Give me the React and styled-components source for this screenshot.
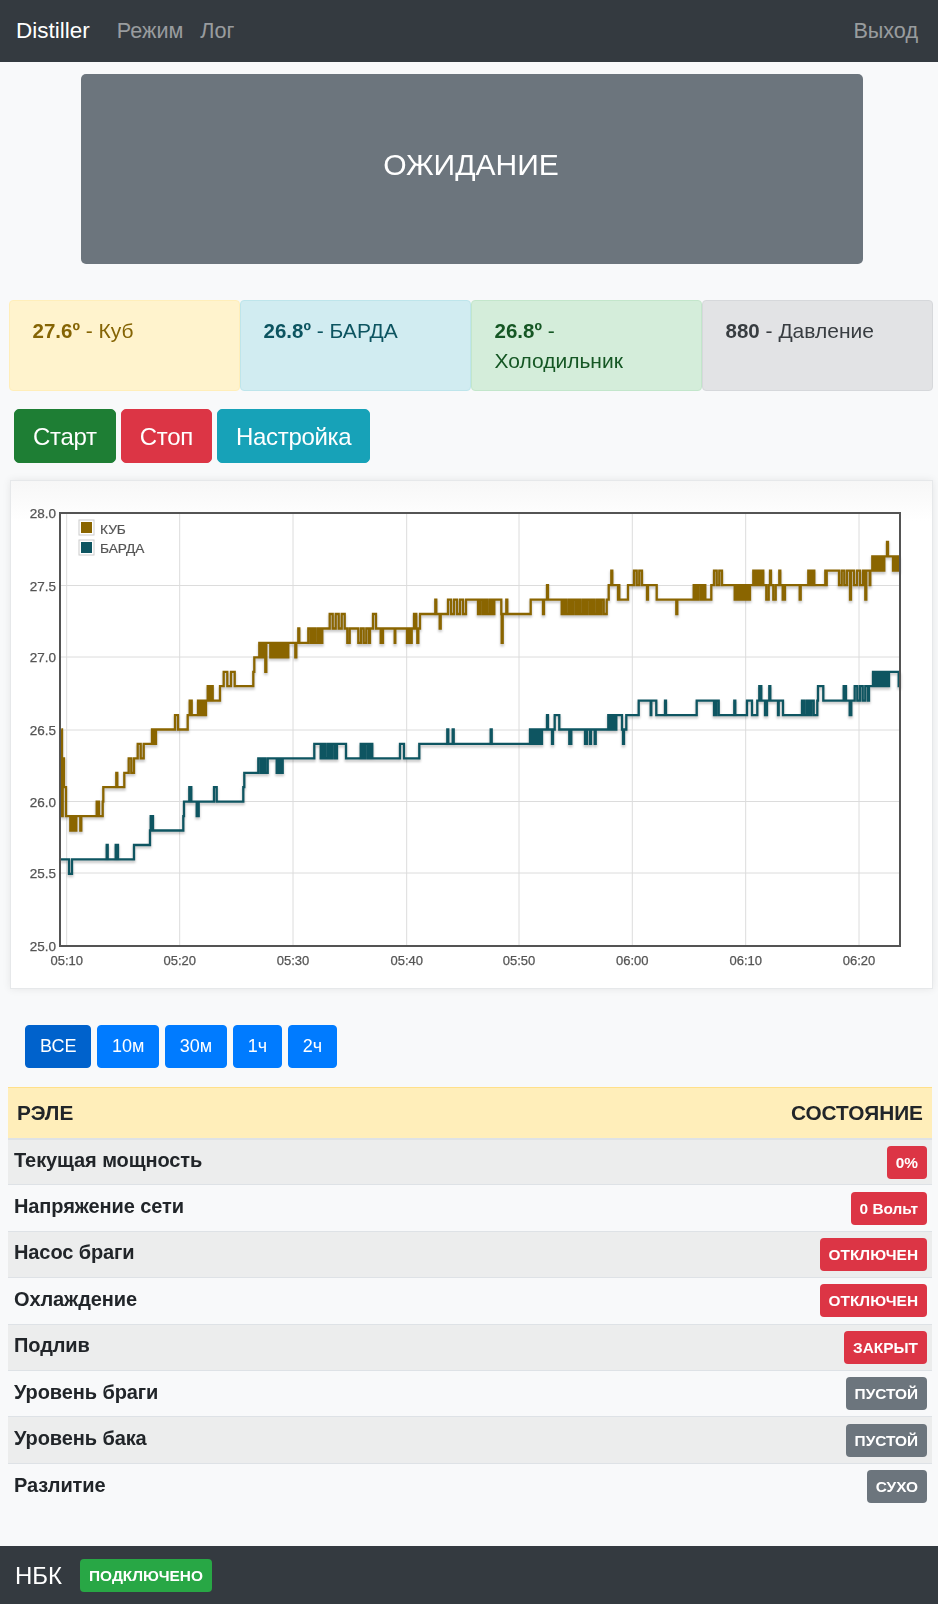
import React from "react";
import styled, { createGlobalStyle } from "styled-components";

const Global = createGlobalStyle`
  html, body { margin: 0; padding: 0; background: #f8f9fa; }
  body { font-family: "Liberation Sans", Arial, sans-serif; font-size: 20px; line-height: 1.5; color: #212529; }
  * { box-sizing: border-box; }
`;

const Page = styled.div`
  width: 938px;
  height: 1604px;
  display: flex;
  flex-direction: column;
  filter: blur(0.35px);
`;

const Navbar = styled.nav`
  height: 62px;
  flex: none;
  background: #343a40;
  display: flex;
  align-items: center;
  padding: 0 20px 0 16px;
`;
const Brand = styled.span`
  color: #fff;
  font-size: 22.5px;
  margin-right: 27px;
`;
const NavLink = styled.span`
  color: rgba(255, 255, 255, 0.5);
  font-size: 21.6px;
  margin-right: 17px;
  &:last-child { margin: 0 0 0 auto; }
`;

const Main = styled.main`
  flex: 1;
  padding: 12px 5px 0 8px;
`;

const Hero = styled.div`
  width: 782px;
  height: 190px;
  margin: 0 0 36px 73px;
  background: #6c757d;
  border-radius: 5px;
  color: #fff;
  font-size: 30px;
  display: flex;
  align-items: center;
  justify-content: center;
  padding: 0 2px 10px 0;
`;

const Alerts = styled.div`
  margin: 0 0 18px 1px;
  width: 924px;
  display: grid;
  grid-template-columns: repeat(4, 1fr);
`;
const Alert = styled.div`
  height: 90.5px;
  padding: 15px 22.5px;
  border: 1px solid ${(p) => p.$border};
  border-radius: 4px;
  background: ${(p) => p.$bg};
  color: ${(p) => p.$fg};
  font-size: 21px;
  line-height: 30px;
`;
const Value = styled.b`
  font-weight: 700;
  font-size: 20.5px;
`;

const Actions = styled.div`
  display: flex;
  gap: 5px;
  margin: 0 0 17px 6px;
`;
const ActionButton = styled.button`
  height: 54.5px;
  padding: 2px 18px 0;
  border: 1px solid ${(p) => p.$bg};
  border-radius: 5px;
  background: ${(p) => p.$bg};
  color: #fff;
  font: 24px "Liberation Sans", Arial, sans-serif;
  letter-spacing: -0.3px;
`;

const ChartCard = styled.section`
  width: 923px;
  height: 509px;
  margin: 0 0 36px 2px;
  background: linear-gradient(#f7f7f7, #fff 40px);
  border: 1px solid #e6e8ea;
  box-shadow: 0 0 8px rgba(0, 0, 0, 0.08);
  & svg { display: block; }
`;

const Ranges = styled.div`
  display: flex;
  gap: 5.5px;
  margin: 0 0 19px 17px;
`;
const RangeButton = styled.button`
  height: 43px;
  padding: 0 14px;
  border: 1px solid ${(p) => (p.$active ? "#0062cc" : "#007bff")};
  border-radius: 4px;
  background: ${(p) => (p.$active ? "#0062cc" : "#007bff")};
  color: #fff;
  font: 18px "Liberation Sans", Arial, sans-serif;
`;

const Table = styled.table`
  width: 924px;
  border-collapse: collapse;
  table-layout: auto;
`;
const HeadRow = styled.tr`
  height: 51px;
  background: #ffeeba;
  border-top: 1px solid #ffe08a;
  border-bottom: 2px solid #dee2e6;
`;
const HeadCell = styled.th`
  padding: 0 9px;
  font-size: 20.8px;
  font-weight: 700;
  text-align: ${(p) => p.$align || "left"};
`;
const Row = styled.tr`
  height: 46.4px;
  background: ${(p) => (p.$odd ? "#eceded" : "transparent")};
  border-bottom: 1px solid #dee2e6;
  &:last-child { border-bottom: 0; }
`;
const NameCell = styled.td`
  padding: 0 0 4px 6px;
  font-size: 20px;
  font-weight: 700;
  letter-spacing: -0.1px;
`;
const StateCell = styled.td`
  padding: 0 5px 0 0;
  text-align: right;
  vertical-align: middle;
`;
const Badge = styled.span`
  display: inline-block;
  padding: 9px;
  border-radius: 4px;
  background: ${(p) => p.$bg};
  color: #fff;
  font-size: 15.4px;
  font-weight: 700;
  line-height: 15px;
  vertical-align: middle;
`;

const Footer = styled.footer`
  height: 58px;
  flex: none;
  background: #343a40;
  display: flex;
  align-items: center;
  gap: 18px;
  padding: 1px 15px 0;
  color: #fff;
  font-size: 24px;
`;

/* ---- chart ---- */
const toX = (z) => z / 3;
const toY = (t) => 946 - (t - 250) * (433 / 30);

function build(items, offset = 0, startX, startV) {
  let x = startX ?? items[0][0] + offset;
  let v = startV ?? items[0][1];
  const pts = [[x, v]];
  const go = (nx, nv) => {
    pts.push([nx, v]);
    pts.push([nx, nv]);
    x = nx;
    v = nv;
  };
  items.forEach((it) => {
    const nx = it[0] + offset;
    if (it.length === 2) {
      go(nx, it[1]);
    } else if (it[2] === "s") {
      const keep = v;
      go(nx, it[1]);
      go(nx + 3, keep);
    } else {
      const [, a, b, rawPeriod = 7] = it;
      const period = rawPeriod + 2;
      if (v !== a && v !== b) go(x, a);
      let cur = v === a ? b : a;
      let px = x;
      while (px + period < nx) {
        px += period;
        go(px, cur);
        cur = cur === a ? b : a;
      }
      go(nx, v);
    }
  });
  return pts;
}

const cubLeft = [
  [184, 265], [186, 259], [188, 263], [192, 261], [198, 259], [205, 259],
  [232, 258, 259, 4], [238, 259], [241, 258, "s"], [283, 259],
  [298, 259, 260, 5], [308, 260], [310, 261], [347, 261], [349, 262, "s"], [370, 261], [373, 262],
  [378, 262], [404, 262, 263, 6], [440, 263, 264, 7], [450, 264], [470, 264, 265, 4], [516, 265],
  [538, 265, 266, 7], [563, 266], [580, 266, 267, 4], [588, 266], [615, 266, 267, 4], [618, 267],
  [640, 267, 268, 3], [660, 268], [712, 268, 269, 9], [760, 269], [763, 270], [772, 270],
  [795, 270, 271, 4], [796, 269, "s"], [805, 271], [868, 270, 271, 4], [885, 271], [886, 270, "s"],
  [894, 271], [895, 272, "s"], [918, 271], [972, 271, 272, 5], [980, 272], [1035, 272, 273, 7],
  [1052, 271, 272, 5], [1075, 271], [1110, 271, 272, 6], [1135, 272, 273, 7], [1150, 271, 272, 5],
  [1170, 272], [1184, 271], [1186, 272], [1215, 272], [1235, 271, 272, 4], [1250, 272, 273, 5],
  [1252, 271, "s"], [1258, 272], [1260, 273], [1305, 273], [1306, 274, "s"], [1318, 273], [1319, 272, "s"],
  [1335, 273], [1404, 273, 274, 7],
];
const cubRight = [
  [30, 273], [85, 273, 274, 5], [100, 273], [101, 271, "s"], [114, 273], [115, 274, "s"], [180, 273],
  [195, 273, 274, 6], [224, 274], [225, 273, "s"], [236, 274], [237, 275, "s"], [274, 274], [410, 273, 274, 5],
  [416, 274], [428, 274, 275, 4], [430, 276, "s"], [438, 274, 275, 4], [450, 274], [451, 275, "s"], [476, 274],
  [480, 275], [490, 275], [530, 275, 276, 6], [536, 275], [537, 274, "s"], [563, 275], [566, 274], [624, 274],
  [625, 273, "s"], [670, 274], [715, 274, 275, 5], [730, 275], [770, 275, 276, 6], [800, 274], [801, 275, "s"],
  [850, 274, 275, 4], [888, 275, 276, 4], [905, 274, 275, 5], [906, 276, "s"], [930, 274, 275, 5], [934, 276, "s"],
  [955, 274, 275, 5], [995, 274], [998, 275], [1015, 275], [1045, 275, 276, 4], [1072, 276], [1073, 275, "s"],
  [1105, 276], [1145, 275, 276, 6], [1146, 274, "s"], [1190, 275, 276, 7], [1192, 274, "s"], [1205, 275],
  [1207, 276], [1255, 276, 277, 4], [1257, 278, "s"], [1275, 276], [1295, 276, 277, 4],
];
const bardaLeft = [
  [180, 256], [198, 256], [225, 255, 256, 7], [318, 256], [320, 257, "s"], [340, 256], [360, 256, 257, 5],
  [402, 257], [450, 258], [452, 259], [460, 258, 259, 5], [550, 259], [552, 260], [562, 260], [578, 260, 261, 4],
  [584, 260], [598, 259, 260, 4], [640, 260], [642, 261], [656, 260, 261, 6], [730, 261], [733, 262], [768, 262],
  [810, 262, 263, 5], [824, 263], [852, 262, 263, 4], [940, 263], [943, 264], [955, 264], [1012, 263, 264, 5],
  [1035, 264], [1038, 263], [1075, 263], [1122, 263, 264, 5], [1190, 263], [1200, 264], [1212, 263],
  [1256, 263], [1258, 264], [1340, 264], [1342, 265, "s"], [1356, 264], [1358, 265, "s"], [1404, 264],
];
const bardaRight = [
  [67, 264], [68, 265, "s"], [180, 264], [228, 264, 265, 4], [236, 265], [237, 266, "s"], [250, 265], [252, 264, "s"],
  [258, 265], [260, 266], [270, 266], [274, 265], [298, 265], [312, 264, 265, 4], [345, 265], [360, 264, 265, 4],
  [365, 265], [366, 264, "s"], [379, 265], [380, 264, "s"], [415, 265], [448, 265, 266, 4], [462, 265], [465, 264, "s"],
  [473, 265], [475, 266], [505, 266], [518, 266, 267, 5], [548, 266], [550, 267], [562, 267], [565, 266], [590, 266],
  [591, 267, "s"], [680, 266], [688, 266, 267, 4], [738, 266], [756, 266, 267, 5], [798, 266], [799, 267, "s"],
  [835, 266], [837, 267], [848, 267], [852, 266], [868, 267], [885, 267, 268, 4], [900, 266, 267, 4], [904, 268, "s"],
  [930, 266], [932, 267], [942, 267], [945, 266], [995, 266], [1040, 266, 267, 5], [1048, 267], [1050, 268], [1062, 268],
  [1066, 267], [1120, 267], [1140, 267, 268, 5], [1152, 266, 267, 3], [1195, 267, 268, 6], [1200, 267], [1203, 268],
  [1212, 268], [1215, 269], [1265, 268, 269, 4], [1280, 269], [1285, 269], [1292, 268, "s"],
];

const pathOf = (pts) =>
  pts.map(([x, v], i) => `${i ? "L" : "M"}${toX(x).toFixed(1)} ${toY(v).toFixed(1)}`).join(" ");

const join = (l, r) => {
  const a = build(l);
  const last = a[a.length - 1];
  const b = build(r, 1404, last[0], last[1]);
  return pathOf([...a, ...b]);
};

const CUB = join(cubLeft, cubRight);
const BARDA = join(bardaLeft, bardaRight);
const xTicks = [[66.7, "05:10"], [179.7, "05:20"], [293, "05:30"], [406.7, "05:40"], [519, "05:50"], [632.3, "06:00"], [745.7, "06:10"], [859, "06:20"]];
const yTicks = [[513, "28.0"], [585.5, "27.5"], [657, "27.0"], [730, "26.5"], [801.5, "26.0"], [873, "25.5"], [946, "25.0"]];

const Chart = () => (
  <svg width="921" height="507" viewBox="11 481 921 507" fontFamily="Liberation Sans, Arial, sans-serif">
    <defs>
      <filter id="lineShadow" x="-5%" y="-5%" width="110%" height="110%">
        <feGaussianBlur stdDeviation="0.8" />
      </filter>
    </defs>
    <rect x="60" y="513" width="840" height="433" fill="#fff" fillOpacity="0.6" />
    {xTicks.map(([x]) => (
      <line key={x} x1={x} x2={x} y1="513" y2="946" stroke="#dcdcdc" strokeWidth="1" />
    ))}
    {yTicks.slice(1, -1).map(([y]) => (
      <line key={y} x1="60" x2="900" y1={y} y2={y} stroke="#dcdcdc" strokeWidth="1" />
    ))}
    <g fill="none" strokeLinejoin="miter">
      <g filter="url(#lineShadow)" transform="translate(0 2)">
        <path d={CUB} stroke="#000" strokeOpacity="0.2" strokeWidth="3" />
        <path d={BARDA} stroke="#000" strokeOpacity="0.2" strokeWidth="3" />
      </g>
      <path d={CUB} stroke="#8a6500" strokeWidth="2.3" />
      <path d={BARDA} stroke="#0e5561" strokeWidth="2.3" />
    </g>
    <rect x="60" y="513" width="840" height="433" fill="none" stroke="#545454" strokeWidth="2" />
    <g fill="#545454" stroke="#545454" strokeWidth="0.25">
      {xTicks.map(([x, t]) => (
        <text key={t} x={x} y="965" fontSize="13" textAnchor="middle">{t}</text>
      ))}
      {yTicks.map(([y, t]) => (
        <text key={t} x="56" y={y + 5} fontSize="13.5" textAnchor="end">{t}</text>
      ))}
    </g>
    <rect x="79" y="520" width="15" height="15" fill="#fff" stroke="#ccc" />
    <rect x="81" y="522" width="11" height="11" fill="#8a6500" />
    <rect x="79" y="540" width="15" height="15" fill="#fff" stroke="#ccc" />
    <rect x="81" y="542" width="11" height="11" fill="#0e5561" />
    <g fill="#545454" fontSize="13.7" stroke="#545454" strokeWidth="0.2">
      <text x="100" y="534">КУБ</text>
      <text x="100" y="553">БАРДА</text>
    </g>
  </svg>
);

const rows = [
  ["Текущая мощность", "0%", "#dc3545"],
  ["Напряжение сети", "0 Вольт", "#dc3545"],
  ["Насос браги", "ОТКЛЮЧЕН", "#dc3545"],
  ["Охлаждение", "ОТКЛЮЧЕН", "#dc3545"],
  ["Подлив", "ЗАКРЫТ", "#dc3545"],
  ["Уровень браги", "ПУСТОЙ", "#6c757d"],
  ["Уровень бака", "ПУСТОЙ", "#6c757d"],
  ["Разлитие", "СУХО", "#6c757d"],
];

export default function App() {
  return (
    <Page>
      <Global />
      <Navbar>
        <Brand>Distiller</Brand>
        <NavLink>Режим</NavLink>
        <NavLink>Лог</NavLink>
        <NavLink>Выход</NavLink>
      </Navbar>
      <Main>
        <Hero>ОЖИДАНИЕ</Hero>
        <Alerts>
          <Alert $bg="#fff3cd" $border="#ffeeba" $fg="#856404"><Value>27.6º</Value> - Куб</Alert>
          <Alert $bg="#d1ecf1" $border="#bee5eb" $fg="#0c5460"><Value>26.8º</Value> - БАРДА</Alert>
          <Alert $bg="#d4edda" $border="#c3e6cb" $fg="#155724"><Value>26.8º</Value> - Холодильник</Alert>
          <Alert $bg="#e2e3e5" $border="#d6d8db" $fg="#383d41"><Value>880</Value> - Давление</Alert>
        </Alerts>
        <Actions>
          <ActionButton $bg="#1e7e34">Старт</ActionButton>
          <ActionButton $bg="#dc3545">Стоп</ActionButton>
          <ActionButton $bg="#17a2b8">Настройка</ActionButton>
        </Actions>
        <ChartCard><Chart /></ChartCard>
        <Ranges>
          <RangeButton $active>ВСЕ</RangeButton>
          <RangeButton>10м</RangeButton>
          <RangeButton>30м</RangeButton>
          <RangeButton>1ч</RangeButton>
          <RangeButton>2ч</RangeButton>
        </Ranges>
        <Table>
          <thead>
            <HeadRow>
              <HeadCell>РЭЛЕ</HeadCell>
              <HeadCell $align="right">СОСТОЯНИЕ</HeadCell>
            </HeadRow>
          </thead>
          <tbody>
            {rows.map(([name, state, color], i) => (
              <Row key={name} $odd={i % 2 === 0}>
                <NameCell>{name}</NameCell>
                <StateCell><Badge $bg={color}>{state}</Badge></StateCell>
              </Row>
            ))}
          </tbody>
        </Table>
      </Main>
      <Footer>
        НБК
        <Badge $bg="#28a745">ПОДКЛЮЧЕНО</Badge>
      </Footer>
    </Page>
  );
}
